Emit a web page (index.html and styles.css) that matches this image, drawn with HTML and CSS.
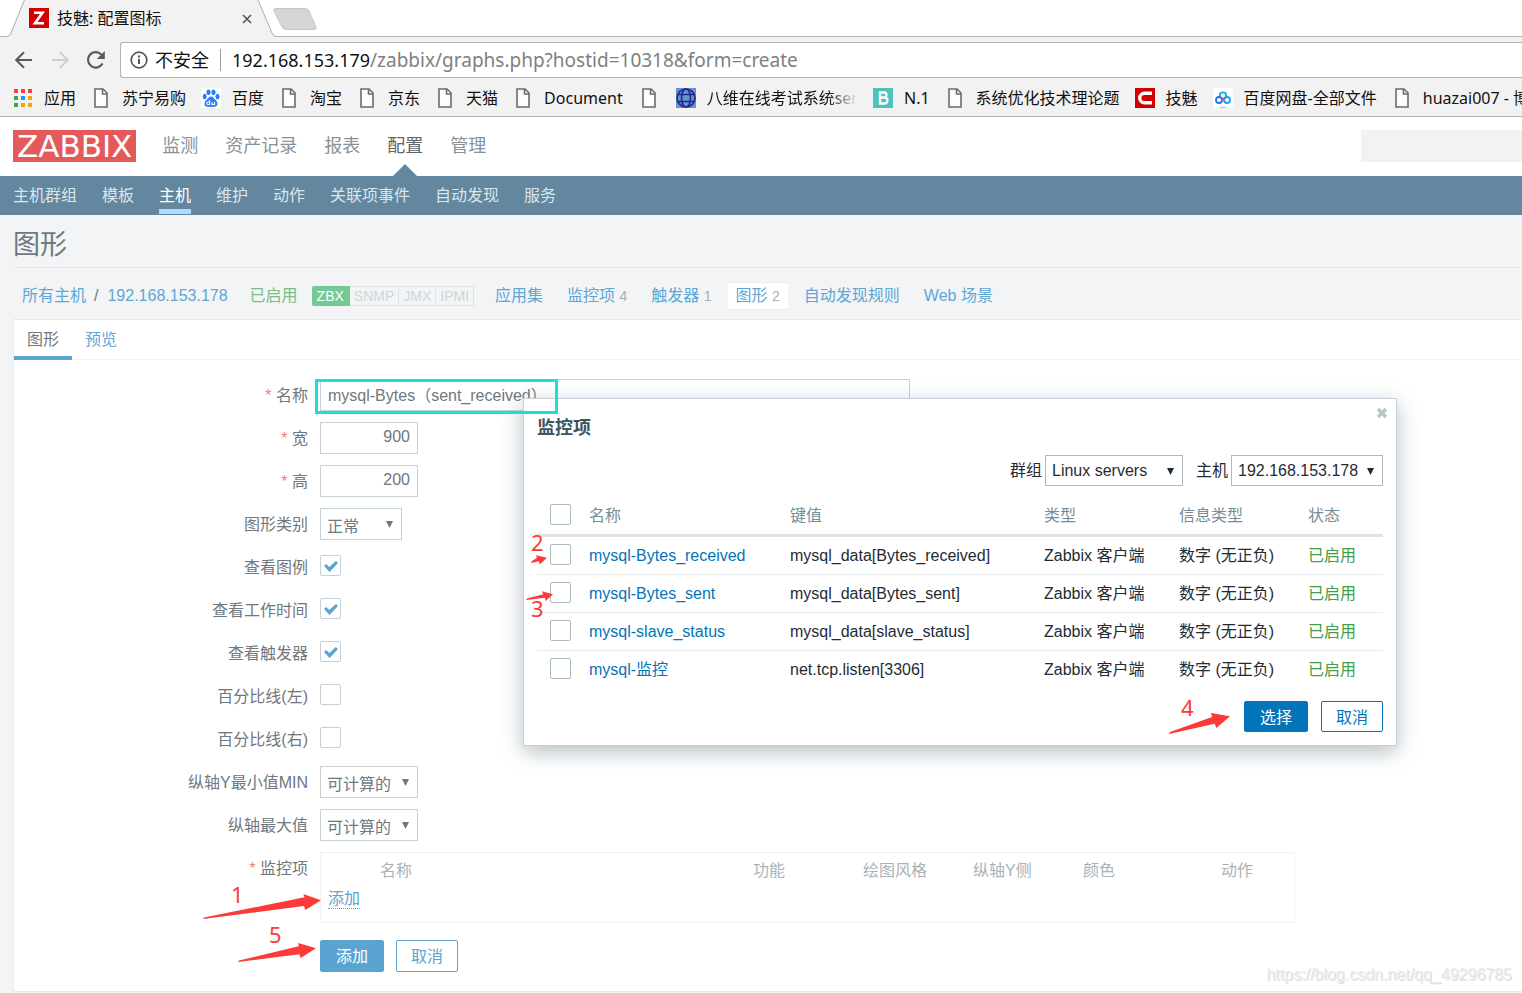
FILE: index.html
```html
<!DOCTYPE html>
<html lang="zh-CN">
<head>
<meta charset="utf-8">
<title>技魅: 配置图标</title>
<link rel="stylesheet" href="styles.css">
</head>
<body>
<svg class="defs" aria-hidden="true">
  <symbol id="page" viewBox="0 0 20 20"><path d="M4 1h8l4 4v14H4z" fill="#fdfdfd" stroke="#6b6b6b" stroke-width="1.6"/><path d="M11.5 1v5H16" fill="none" stroke="#6b6b6b" stroke-width="1.6"/></symbol>
</svg>

<div class="browser">
  <div class="tabstrip">
    <div class="tab">
      <svg class="tab-shape" viewBox="0 0 269 38" aria-hidden="true"><path d="M0 37.5 Q3 36 4 33L17 0H251L265 33Q266 36 269 37.5z" fill="#f2f2f2"/><path d="M0 36.5Q3 36 4 33L17.500 0M251 0L265 33Q266 36 269 36.500" fill="none" stroke="#ababab"/></svg>
      <svg class="favicon" viewBox="0 0 20 20" aria-hidden="true"><path fill="#d40000" d="M0 0h20v20H0z"/><path d="M5 4.700h8.500L6 15.300H15" fill="none" stroke="#fff" stroke-width="2.600"/></svg>
      <span class="tab-title">技魅: 配置图标</span>
      <button class="tab-close" aria-label="关闭标签"><svg viewBox="0 0 10 10"><path d="M1 1l8 8M9 1L1 9" stroke="#555" stroke-width="1.600"/></svg></button>
    </div>
    <svg class="newtab" viewBox="0 0 46 24" aria-hidden="true"><path d="M4 1.500H33Q36 1.500 37 4L44 20Q45 22.500 42 22.500H14Q11 22.500 10 20L2 4Q1 1.500 4 1.500z" fill="#d5d5d5" stroke="#c6c6c6"/></svg>
  </div>
  <div class="toolbar">
    <button class="tool" aria-label="后退"><svg viewBox="0 0 20 20"><path d="M18 10H2.500M10 2.200L2.200 10l7.800 7.800" fill="none" stroke="#5a5a5a" stroke-width="2"/></svg></button>
    <button class="tool" aria-label="前进"><svg viewBox="0 0 20 20"><path d="M2 10h15.500M10 2.200l7.800 7.800-7.800 7.800" fill="none" stroke="#d0d0d0" stroke-width="2"/></svg></button>
    <button class="tool" aria-label="刷新"><svg viewBox="0 0 20 20"><path d="M16.500 13.500A7.700 7.700 0 1 1 15.300 4.500" fill="none" stroke="#5a5a5a" stroke-width="2.200"/><path d="M18.800 1v8h-8z" fill="#5a5a5a"/></svg></button>
    <div class="omnibox">
      <svg class="info" viewBox="0 0 18 18" aria-hidden="true"><circle cx="9" cy="9" r="7.800" fill="none" stroke="#555" stroke-width="1.700"/><path d="M9 8v5" stroke="#555" stroke-width="2"/><path d="M8 4.500h2v2H8z" fill="#555"/></svg>
      <span class="insecure">不安全</span>
      <span class="url">192.168.153.179<span class="path">/zabbix/graphs.php?hostid=10318&amp;form=create</span></span>
    </div>
  </div>
  <nav class="bookmarks">
    <a href="#"><svg viewBox="0 0 20 20"><path fill="#f44336" d="M1 1h4v4H1zM8 1h4v4H8zM15 1h4v4h-4z"/><path fill="#34a853" d="M1 8h4v4H1zM1 15h4v4H1z"/><path fill="#2196f3" d="M8 8h4v4H8z"/><path fill="#fba505" d="M15 8h4v4h-4zM8 15h4v4H8zM15 15h4v4h-4z"/></svg>应用</a>
    <a href="#"><svg><use href="#page"/></svg>苏宁易购</a>
    <a href="#"><svg viewBox="0 0 20 20"><path fill="#fff" d="M0 0h20v20H0z"/><g fill="#2b7cf6"><ellipse cx="3.700" cy="8.500" rx="2" ry="2.700"/><ellipse cx="7.500" cy="4.200" rx="2" ry="2.800"/><ellipse cx="12.500" cy="4.200" rx="2" ry="2.800"/><ellipse cx="16.500" cy="8.500" rx="2" ry="2.700"/><path d="M10 8.500c2 0 3 2 4.500 3.500 2.500 2 3 6.500-.8 6.800-2 .2-5.400.2-7.400 0C2.500 18.500 3 14 5.500 12 7 10.500 8 8.500 10 8.500z"/></g><path d="M8.500 12v4.500H7a1.200 1.200 0 0 1 0-2.500h1.500M11 14v2.500h2.500V14" fill="none" stroke="#fff" stroke-width="1.100"/></svg>百度</a>
    <a href="#"><svg><use href="#page"/></svg>淘宝</a>
    <a href="#"><svg><use href="#page"/></svg>京东</a>
    <a href="#"><svg><use href="#page"/></svg>天猫</a>
    <a href="#"><svg><use href="#page"/></svg>Document</a>
    <a href="#" class="untitled" aria-label="书签"><svg><use href="#page"/></svg></a>
    <a href="#"><svg viewBox="0 0 20 20"><path fill="#6395cf" d="M0 0h20v20H0z"/><g fill="none" stroke="#252594" stroke-width="1.600"><circle cx="10" cy="10" r="9"/><ellipse cx="10" cy="10" rx="4.500" ry="9"/><path d="M2 6.500h16M2 13.500h16"/></g></svg><span class="faded">八维在线考试系统ser</span></a>
    <a href="#"><svg viewBox="0 0 20 20"><path fill="#4ec3bb" d="M0 0h20v20H0z"/><path d="M7 4.500h4a2.500 2.500 0 0 1 0 5H7zm0 5h4.500a3 3 0 0 1 0 6H7z" fill="none" stroke="#fff" stroke-width="2.300"/></svg>N.1</a>
    <a href="#"><svg><use href="#page"/></svg>系统优化技术理论题</a>
    <a href="#"><svg viewBox="0 0 20 20"><path fill="#d20000" d="M0 0h20v20H0z"/><path d="M17 5.200H9.500a4.800 4.800 0 0 0 0 9.600H17" fill="none" stroke="#fff" stroke-width="3.400"/></svg>技魅</a>
    <a href="#"><svg viewBox="0 0 20 20"><rect width="20" height="20" rx="3" fill="#fff"/><circle cx="10" cy="7.500" r="3.200" fill="none" stroke="#10a8f0" stroke-width="1.800"/><g fill="none" stroke-width="1.800"><circle cx="6" cy="12" r="3" stroke="#1678ee"/><circle cx="14" cy="12" r="3" stroke="#13a3ee"/><path d="M7.300 9.500q1.700.5 2.700 1.500l2 2.500" stroke="#f2506b"/></g><path d="M7 19.500h6" stroke="#f8a6b6"/></svg>百度网盘-全部文件</a>
    <a href="#"><svg><use href="#page"/></svg>huazai007 - 博</a>
  </nav>
</div>

<header class="header">
  <a class="logo" href="#">ZABBIX</a>
  <nav class="topnav"><a href="#">监测</a><a href="#">资产记录</a><a href="#">报表</a><a href="#" class="current">配置</a><a href="#">管理</a></nav>
  <div class="search"></div>
</header>
<nav class="subnav"><a href="#">主机群组</a><a href="#">模板</a><a href="#" class="current">主机</a><a href="#">维护</a><a href="#">动作</a><a href="#">关联项事件</a><a href="#">自动发现</a><a href="#">服务</a></nav>

<main class="main">
  <h1>图形</h1>
  <div class="crumbs">
    <a href="#">所有主机</a><span class="slash">/</span><a href="#">192.168.153.178</a>
    <span class="enabled">已启用</span>
    <span class="badges"><span class="on">ZBX</span><span>SNMP</span><span>JMX</span><span>IPMI</span></span>
    <nav class="hostnav"><a href="#">应用集</a><a href="#">监控项 <sup>4</sup></a><a href="#">触发器 <sup>1</sup></a><a href="#" class="current">图形 <sup>2</sup></a><a href="#">自动发现规则</a><a href="#">Web 场景</a></nav>
  </div>

  <section class="panel">
    <nav class="tabs"><a href="#" class="current">图形</a><a href="#">预览</a></nav>
    <form class="form">
      <label class="req" for="name">名称</label><div><input id="name" class="text wide" type="text" value="mysql-Bytes（sent_received）"></div>
      <label class="req" for="w">宽</label><div><input id="w" class="text num" type="text" value="900"></div>
      <label class="req" for="h">高</label><div><input id="h" class="text num" type="text" value="200"></div>
      <label for="type">图形类别</label><div><span class="select short"><select id="type"><option>正常</option></select></span></div>
      <label for="legend">查看图例</label><div><input id="legend" class="check" type="checkbox" checked></div>
      <label for="work">查看工作时间</label><div><input id="work" class="check" type="checkbox" checked></div>
      <label for="trig">查看触发器</label><div><input id="trig" class="check" type="checkbox" checked></div>
      <label for="pl">百分比线(左)</label><div><input id="pl" class="check" type="checkbox"></div>
      <label for="pr">百分比线(右)</label><div><input id="pr" class="check" type="checkbox"></div>
      <label for="ymin">纵轴Y最小值MIN</label><div><span class="select"><select id="ymin"><option>可计算的</option></select></span></div>
      <label for="ymax">纵轴最大值</label><div><span class="select"><select id="ymax"><option>可计算的</option></select></span></div>
      <span class="req label">监控项</span>
      <div class="items">
        <table>
          <colgroup><col class="i1"><col class="i2"><col class="i3"><col class="i3"><col class="i3"><col class="i4"><col></colgroup>
          <thead><tr><th></th><th>名称</th><th>功能</th><th>绘图风格</th><th>纵轴Y侧</th><th>颜色</th><th>动作</th></tr></thead>
          <tbody><tr><td colspan="7"><button type="button" class="linkbtn">添加</button></td></tr></tbody>
        </table>
      </div>
      <span></span>
      <div class="actions"><button type="button" class="btn">添加</button><button type="button" class="btn alt">取消</button></div>
    </form>
  </section>
</main>

<section class="modal" role="dialog" aria-labelledby="mtitle">
  <button class="close" aria-label="关闭"><svg viewBox="0 0 12 12"><path d="M2 2l8 8M10 2l-8 8" stroke="#b8c5cb" stroke-width="3.200"/></svg></button>
  <h2 id="mtitle">监控项</h2>
  <div class="filters">
    <label for="grp">群组</label><span class="select group"><select id="grp"><option>Linux servers</option></select></span>
    <label for="host">主机</label><span class="select host"><select id="host"><option>192.168.153.178</option></select></span>
  </div>
  <table class="list">
    <colgroup><col class="c1"><col class="c2"><col class="c3"><col class="c4"><col class="c5"><col></colgroup>
    <thead><tr><th><input class="check" type="checkbox" aria-label="全选"></th><th>名称</th><th>键值</th><th>类型</th><th>信息类型</th><th>状态</th></tr></thead>
    <tbody>
      <tr><td><input class="check" type="checkbox" aria-label="mysql-Bytes_received"></td><td><a href="#">mysql-Bytes_received</a></td><td>mysql_data[Bytes_received]</td><td>Zabbix 客户端</td><td>数字 (无正负)</td><td class="ok">已启用</td></tr>
      <tr><td><input class="check" type="checkbox" aria-label="mysql-Bytes_sent"></td><td><a href="#">mysql-Bytes_sent</a></td><td>mysql_data[Bytes_sent]</td><td>Zabbix 客户端</td><td>数字 (无正负)</td><td class="ok">已启用</td></tr>
      <tr><td><input class="check" type="checkbox" aria-label="mysql-slave_status"></td><td><a href="#">mysql-slave_status</a></td><td>mysql_data[slave_status]</td><td>Zabbix 客户端</td><td>数字 (无正负)</td><td class="ok">已启用</td></tr>
      <tr><td><input class="check" type="checkbox" aria-label="mysql-监控"></td><td><a href="#">mysql-监控</a></td><td>net.tcp.listen[3306]</td><td>Zabbix 客户端</td><td>数字 (无正负)</td><td class="ok">已启用</td></tr>
    </tbody>
  </table>
  <div class="actions"><button class="btn">选择</button><button class="btn alt">取消</button></div>
</section>

<svg class="notes" width="1522" height="993" aria-hidden="true">
  <rect x="316.500" y="380.500" width="240" height="32" fill="none" stroke="#1adfe0" stroke-width="3"/>
  <g fill="#fc3b38">
    <path d="M203 919L204 917.500L304.500 897.300L303.300 894L321 900.300L305.300 910L304 906z"/>
    <path d="M238 962L239 960.500L298.700 946.300L298.300 943L316 948.300L300.700 958L299.300 954.300z"/>
    <path d="M1169 734L1170 732L1212 717L1211 713L1230 716.300L1216.400 728L1214.700 723.700z"/>
    <path d="M526 600L527 598.500L543.300 594.300L541.700 591.300L553 594.300L545.700 601L545 597.700z"/>
    <path d="M531 563L532 561L537 557.700L535.700 555.300L547 557.700L539.700 564.500L539 561.300z"/>
    <text x="231" y="903">1</text><text x="269" y="943">5</text><text x="531" y="551">2</text><text x="531" y="617">3</text><text x="1181" y="716">4</text>
  </g>
</svg>
<div class="watermark">https://blog.csdn.net/qq_49296785</div>
</body>
</html>
```
FILE: styles.css
```css
* { box-sizing: border-box; }
html { overflow: hidden; }
body {
  margin: 0;
  position: relative;
  min-height: 100vh;
  overflow: hidden;
  background: #f2f4f6;
  color: #6f787e;
  font: 16px/20px "Liberation Sans", "Noto Sans CJK SC", sans-serif;
}
a { color: #5fa6d3; text-decoration: none; }
button { padding: 0; border: 0; background: none; font: inherit; }
.defs { position: absolute; width: 0; height: 0; }

/* browser window */
.browser {
  background: #f2f2f2;
  border-bottom: 1px solid #b4b4b4;
  color: #111;
  font-family: "Noto Sans", "Noto Sans CJK SC", sans-serif;
}
.tabstrip {
  display: flex;
  height: 37px;
  padding-left: 7px;
  background: #fff;
  border-bottom: 1px solid #b4b4b4;
}
.tab {
  position: relative;
  display: flex;
  align-items: center;
  width: 269px;
  height: 37px;
  padding: 0 23px 2px 22px;
}
.tab-shape { position: absolute; left: 0; top: 0; width: 269px; height: 38px; }
.favicon { position: relative; width: 20px; height: 20px; margin-right: 8px; }
.tab-title { position: relative; flex: 1; white-space: nowrap; }
.tab-close { position: relative; width: 12px; height: 20px; }
.tab-close svg { width: 10px; height: 10px; }
.newtab { width: 46px; height: 24px; margin: 7px 0 0 -4px; }
.toolbar { display: flex; align-items: center; height: 46px; padding-left: 14px; }
.tool { width: 20px; height: 20px; margin-right: 16px; }
.tool:nth-child(3) { margin-right: 14px; }
.tool svg { display: block; width: 20px; height: 20px; }
.omnibox {
  flex: 1;
  display: flex;
  align-items: center;
  height: 36px;
  padding-left: 9px;
  background: #fff;
  border: 1px solid #b0b0b0;
  border-right: 0;
  border-radius: 3px 0 0 3px;
  font-size: 18px;
  line-height: 24px;
}
.info { width: 18px; height: 18px; margin-right: 7px; }
.insecure { padding-right: 11px; margin-right: 11px; border-right: 1px solid #999; line-height: 22px; }
.path { color: #808080; font-size: 19px; }
.bookmarks {
  display: flex;
  gap: 15px;
  height: 33px;
  padding: 0 0 4px 13px;
  overflow: hidden;
}
.bookmarks a { display: flex; flex: none; align-items: center; gap: 11px; color: #111; white-space: nowrap; }
.bookmarks svg { width: 20px; height: 20px; }
.bookmarks .untitled { padding: 0 2px 0 1px; }
.faded { -webkit-mask-image: linear-gradient(90deg, #000 80%, transparent); mask-image: linear-gradient(90deg, #000 80%, transparent); }

/* site header */
.header { display: flex; align-items: center; height: 59px; padding: 0 0 2px 13px; background: #fff; }
.logo {
  padding: 0 4px;
  background: #e45959;
  color: #fff;
  font: 31px/32px "DejaVu Sans", sans-serif;
}
.topnav { display: flex; gap: 27px; align-self: flex-start; margin-left: 26px; height: 59px; font-size: 18px; line-height: 59px; }
.topnav a { position: relative; color: #8a9196; }
.topnav .current { color: #5d666c; }
.topnav .current::after {
  content: "";
  position: absolute;
  left: 6px;
  bottom: 0;
  border: 12px solid transparent;
  border-top: 0;
  border-bottom-color: #62879e;
}
.search { width: 161px; height: 32px; margin-left: auto; background: #f2f2f2; }
.subnav { display: flex; gap: 25px; height: 39px; padding-left: 13px; background: #62879e; line-height: 40px; }
.subnav a { height: 38px; color: #dbe6ec; }
.subnav .current { border-bottom: 5px solid #afdcfa; color: #fff; }

/* page */
.main { padding-left: 13px; }
h1 { margin: 0; height: 53px; border-bottom: 1px solid #e6e9eb; font-size: 27px; font-weight: 400; line-height: 61px; }
.crumbs { display: flex; align-items: center; height: 51px; padding: 5px 0 0 9px; white-space: nowrap; }
.slash { margin: 0 9px 0 8px; }
.enabled { margin: 0 14px 0 22px; color: #7fbc84; }
.badges { display: flex; font-size: 14px; line-height: 18px; }
.badges span { padding: 0 4px; border: 1px solid #dfe3e5; border-left: 0; color: #cfd6da; }
.badges .on { padding: 0 5px; border-color: #74ca97; border-radius: 2px 0 0 2px; background: #74ca97; color: #fff; }
.hostnav { display: flex; gap: 8px; margin-left: 13px; }
.hostnav a { padding: 3px 8px; border: 1px solid transparent; border-width: 1px 0; border-radius: 2px; }
.hostnav .current { border-color: #e8ebed; background: #fff; }
sup { color: #a5b0b6; font-size: 14px; vertical-align: baseline; }
.panel { border: 1px solid #e6e9eb; border-right: 0; background: #fff; }
.tabs { display: flex; height: 40px; border-bottom: 1px solid #f0f1f2; line-height: 40px; }
.tabs a { height: 40px; padding: 0 13px; }
.tabs .current { border-bottom: 4px solid #5ba4d2; color: #6f787e; }
.form { display: grid; grid-template-columns: 294px 1fr; gap: 11px 12px; padding: 19px 0; }
.form > div { min-height: 32px; }
.form > label, .form > .label { line-height: 33px; height: 32px; text-align: right; }
.req::before { content: "* "; color: #f08080; }
.text { display: block; height: 32px; padding: 0 7px 2px; border: 1px solid #c6d0d5; color: #6f787e; background: #fff; font: inherit; }
.wide { width: 590px; }
.num { width: 98px; text-align: right; }
.select { position: relative; display: inline-block; width: 98px; height: 32px; vertical-align: top; }
.select::after {
  content: "";
  position: absolute;
  right: 9px;
  top: 13px;
  width: 7px;
  height: 7px;
  background: currentColor;
  clip-path: polygon(0 0, 100% 0, 50% 100%);
}
select {
  appearance: none;
  width: 100%;
  height: 100%;
  padding: 5px 6px 0;
  border: 1px solid #c6d0d5;
  border-radius: 0;
  background: #fff;
  color: inherit;
  font: inherit;
}
.short { width: 82px; }
.check {
  appearance: none;
  display: block;
  width: 21px;
  height: 21px;
  margin: 4px 0 0;
  border: 1px solid #c6d0d5;
  border-radius: 2px;
  background: #fff;
}
.check:checked::before {
  content: "";
  display: block;
  width: 14px;
  height: 11px;
  margin: 5px 0 0 3px;
  background: #5ba4d2;
  clip-path: polygon(0 45%, 15% 28%, 38% 55%, 85% 0, 100% 18%, 40% 100%);
}
.items { width: 975px; height: 71px; border: 1px solid #f0f2f3; margin-bottom: 6px; }
table { width: 100%; table-layout: fixed; border-collapse: collapse; }
th { padding: 0; font-weight: 400; text-align: left; }
td { padding: 0; }
.items th { height: 35px; padding-top: 1px; color: #a9b2b7; }
.items td { padding: 1px 7px; }
.i1 { width: 59px; }
.i2 { width: 373px; }
.i3 { width: 110px; }
.i4 { width: 138px; }
.linkbtn { border-bottom: 1px dotted #5ba4d2; color: #5ba4d2; line-height: 19px; }
.actions { display: flex; gap: 12px; }
.btn { height: 32px; padding: 2px 15px 0; border: 1px solid #5ba4d2; border-radius: 2px; background: #5ba4d2; color: #fff; }
.btn.alt { padding: 2px 14px 0; background: #fff; color: #5ba4d2; }

/* item picker */
.modal {
  position: absolute;
  left: 523px;
  top: 398px;
  width: 874px;
  padding: 19px 13px 13px;
  border: 1px solid #c6d0d8;
  background: #fff;
  box-shadow: 0 6px 20px rgba(72, 96, 110, .4);
  color: #1f2c33;
}
.close { position: absolute; right: 8px; top: 8px; width: 12px; height: 12px; }
.close svg { display: block; width: 12px; height: 12px; }
.modal h2 { margin: 0 0 17px; color: #3c5563; font-size: 18px; line-height: 20px; }
.filters { display: flex; align-items: center; justify-content: flex-end; line-height: 30px; }
.filters label { margin-right: 3px; }
.modal .select { height: 31px; }
.modal .select select { padding-top: 0; padding-bottom: 3px; border-color: #acbbc2; }
.modal .group { width: 138px; margin-right: 13px; }
.modal .host { width: 152px; }
.list { margin-top: 8px; border-collapse: separate; border-spacing: 0; }
.list th { height: 43px; padding-top: 3px; border-bottom: 3px solid #dce2e7; color: #768d99; }
.list td { height: 38px; border-bottom: 1px solid #e8ecee; }
.list tr:last-child td { border-bottom-color: transparent; }
.list a { color: #0275b8; }
.list .ok { color: #429e47; }
.list .check { margin: 0 0 0 13px; border-color: #acbbc2; }
.list td .check { margin-bottom: 2px; }
.list th .check { margin-bottom: 2px; }
.c1 { width: 52px; }
.c2 { width: 201px; }
.c3 { width: 254px; }
.c4 { width: 135px; }
.c5 { width: 129px; }
.modal .actions { gap: 13px; justify-content: flex-end; margin-top: 12px; }
.modal .btn { height: 31px; border-color: #0275b8; background: #0275b8; }
.modal .alt { background: #fff; color: #0275b8; }

/* hand annotations */
.notes { position: absolute; left: 0; top: 0; pointer-events: none; }
.notes text { font: 22px "Noto Sans", sans-serif; }
.watermark { position: absolute; right: 10px; bottom: 8px; color: #ececec; text-shadow: 1px 1px 0 #dedede; }
```
